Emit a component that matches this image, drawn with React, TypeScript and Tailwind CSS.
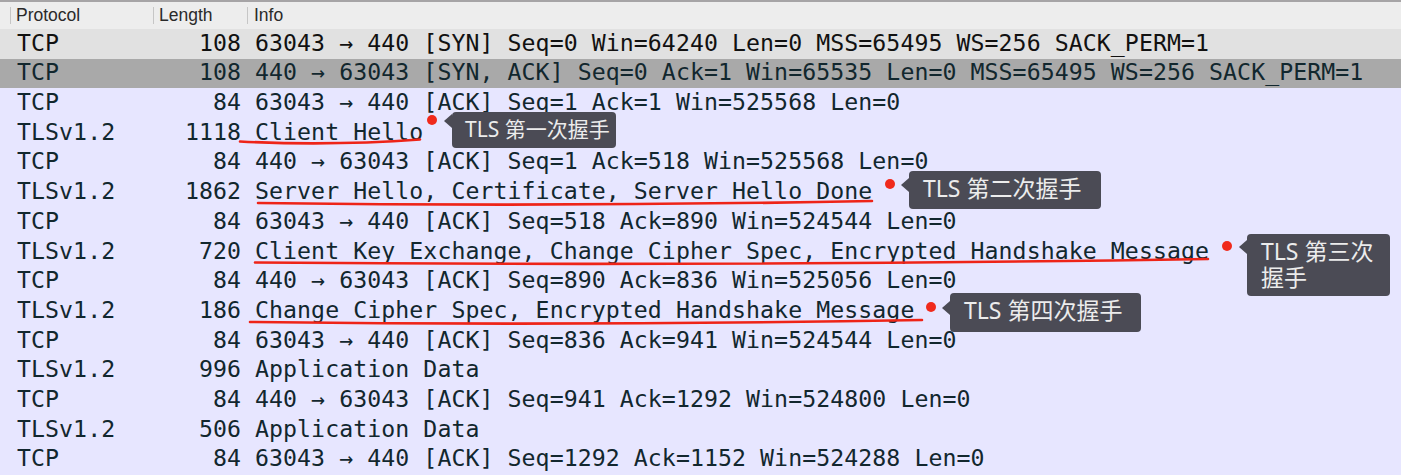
import React from "react";

type Row = { proto: string; len: string; info: string; kind: "sel" | "syn" | "tcp" };

const rows: Row[] = [
  { proto: "TCP", len: "108", info: "63043 → 440 [SYN] Seq=0 Win=64240 Len=0 MSS=65495 WS=256 SACK_PERM=1", kind: "sel" },
  { proto: "TCP", len: "108", info: "440 → 63043 [SYN, ACK] Seq=0 Ack=1 Win=65535 Len=0 MSS=65495 WS=256 SACK_PERM=1", kind: "syn" },
  { proto: "TCP", len: "84", info: "63043 → 440 [ACK] Seq=1 Ack=1 Win=525568 Len=0", kind: "tcp" },
  { proto: "TLSv1.2", len: "1118", info: "Client Hello", kind: "tcp" },
  { proto: "TCP", len: "84", info: "440 → 63043 [ACK] Seq=1 Ack=518 Win=525568 Len=0", kind: "tcp" },
  { proto: "TLSv1.2", len: "1862", info: "Server Hello, Certificate, Server Hello Done", kind: "tcp" },
  { proto: "TCP", len: "84", info: "63043 → 440 [ACK] Seq=518 Ack=890 Win=524544 Len=0", kind: "tcp" },
  { proto: "TLSv1.2", len: "720", info: "Client Key Exchange, Change Cipher Spec, Encrypted Handshake Message", kind: "tcp" },
  { proto: "TCP", len: "84", info: "440 → 63043 [ACK] Seq=890 Ack=836 Win=525056 Len=0", kind: "tcp" },
  { proto: "TLSv1.2", len: "186", info: "Change Cipher Spec, Encrypted Handshake Message", kind: "tcp" },
  { proto: "TCP", len: "84", info: "63043 → 440 [ACK] Seq=836 Ack=941 Win=524544 Len=0", kind: "tcp" },
  { proto: "TLSv1.2", len: "996", info: "Application Data", kind: "tcp" },
  { proto: "TCP", len: "84", info: "440 → 63043 [ACK] Seq=941 Ack=1292 Win=524800 Len=0", kind: "tcp" },
  { proto: "TLSv1.2", len: "506", info: "Application Data", kind: "tcp" },
  { proto: "TCP", len: "84", info: "63043 → 440 [ACK] Seq=1292 Ack=1152 Win=524288 Len=0", kind: "tcp" },
];

const rowClass: Record<Row["kind"], string> = {
  sel: "bg-[#e1e1e1] text-[#111111]",
  syn: "bg-[#a9a9a9] text-[#12272e]",
  tcp: "bg-[#e7e6ff] text-[#12272e]",
};

type Tip = {
  left: number;
  top: number;
  width: number;
  height: number;
  dotX: number;
  dotY: number;
  arrowY: number;
  lines: string[];
  small?: boolean;
};

const tips: Tip[] = [
  { left: 452, top: 112, width: 164, height: 36, dotX: 432, dotY: 120, arrowY: 121, lines: ["TLS 第一次握手"], small: true },
  { left: 909, top: 171, width: 192, height: 38, dotX: 890, dotY: 184, arrowY: 185, lines: ["TLS 第二次握手"] },
  { left: 1247, top: 234, width: 143, height: 62, dotX: 1227, dotY: 246, arrowY: 247, lines: ["TLS 第三次", "握手"] },
  { left: 950, top: 293, width: 191, height: 39, dotX: 931, dotY: 307, arrowY: 308, lines: ["TLS 第四次握手"] },
];

function Tooltip({ t }: { t: Tip }) {
  return (
    <>
      <div
        className="absolute w-[10px] h-[10px] rounded-full bg-[#f02a1c]"
        style={{ left: t.dotX - 5, top: t.dotY - 5 }}
      />
      <div
        className="absolute w-0 h-0 border-y-[7px] border-y-transparent border-r-[8px] border-r-[#4b4b55]"
        style={{ left: t.left - 8, top: t.arrowY - 7 }}
      />
      <div
        className={`absolute rounded-[4px] bg-[#4b4b55] text-[#ececec] ${
          t.small ? "text-[21px] leading-[24px] pl-[13px] pt-[5px]" : "text-[23px] leading-[26px] pl-[14px] pt-[4px]"
        }`}
        style={{
          left: t.left,
          top: t.top,
          width: t.width,
          height: t.height,
          fontFamily: '"Noto Sans", "Noto Sans CJK SC", sans-serif',
        }}
      >
        {t.lines.map((l, i) => (
          <div key={i} className="whitespace-nowrap">{l}</div>
        ))}
      </div>
    </>
  );
}

export default function App() {
  return (
    <div className="relative w-[1401px] h-[475px] overflow-hidden bg-[#e7e6ff]">
      {/* header */}
      <div
        className="flex items-center h-[29px] border-t-[2px] border-[#a6a4a6] bg-[#ededed] text-[#2a2a2a] text-[17.5px]"
        style={{ fontFamily: '"Liberation Sans", Arial, sans-serif' }}
      >
        <div className="flex items-center w-[153px] h-full">
          <div className="w-px h-[17px] bg-[#c6c6c6] ml-[10px]" />
          <span className="ml-[5px]">Protocol</span>
        </div>
        <div className="flex items-center w-[94px] h-full">
          <div className="w-px h-[17px] bg-[#c6c6c6]" />
          <span className="ml-[5px]">Length</span>
        </div>
        <div className="flex items-center h-full">
          <div className="w-px h-[17px] bg-[#c6c6c6]" />
          <span className="ml-[6px]">Info</span>
        </div>
      </div>
      {/* rows */}
      <div
        style={{ fontFamily: '"DejaVu Sans Mono", "Liberation Mono", monospace' }}
        className="text-[23.2px] tracking-[0.07px]"
      >
        {rows.map((r, i) => (
          <div key={i} className={`flex items-center h-[29.7px] whitespace-pre leading-none ${rowClass[r.kind]}`}>
            <div className="w-[153px] pl-[17px] -mt-[3px]">{r.proto}</div>
            <div className="w-[94px] text-right pr-[6px] -mt-[3px]">{r.len}</div>
            <div className="pl-[8px] -mt-[3px]">{r.info}</div>
          </div>
        ))}
      </div>
      {/* underlines */}
      <svg className="absolute left-0 top-0 pointer-events-none" width="1401" height="475">
        <g fill="none" stroke="#ee2418" strokeWidth="2.6" strokeLinecap="round">
          <path d="M240 141.5 Q330 146 420 139.5" />
          <path d="M258 203 Q565 207 872 201" />
          <path d="M255 262.5 Q730 266.5 1208 259" />
          <path d="M250 322 Q586 326 922 320" />
        </g>
      </svg>
      {tips.map((t, i) => (
        <Tooltip key={i} t={t} />
      ))}
    </div>
  );
}
